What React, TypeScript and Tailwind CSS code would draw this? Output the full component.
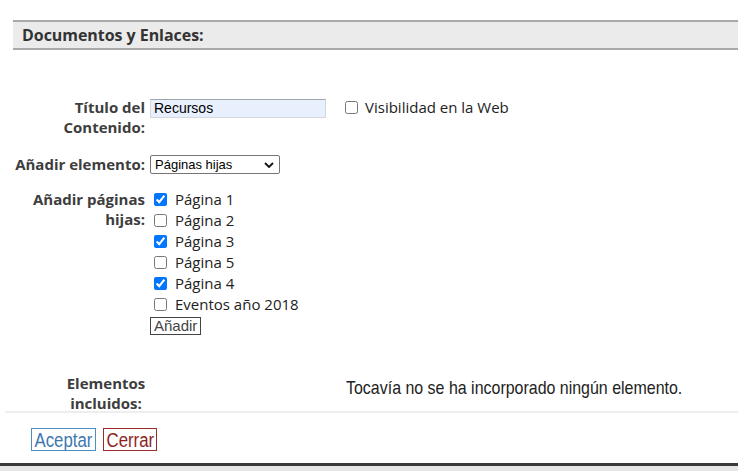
import { useState } from 'react';

const paginas = [
  { id: 'p1', label: 'Página 1', checked: true },
  { id: 'p2', label: 'Página 2', checked: false },
  { id: 'p3', label: 'Página 3', checked: true },
  { id: 'p5', label: 'Página 5', checked: false },
  { id: 'p4', label: 'Página 4', checked: true },
  { id: 'ev', label: 'Eventos año 2018', checked: false },
];

const labelCls =
  "w-[145px] shrink-0 text-right font-['Open_Sans',sans-serif] text-[15px] font-bold leading-[20px] text-[#3d3d3d]";

export default function App() {
  const [checks, setChecks] = useState(paginas.map((p) => p.checked));
  const [visible, setVisible] = useState(false);

  return (
    <div className="h-[471px] w-[738px] overflow-hidden bg-[#e6e6e6]">
      <div className="flex h-[463px] flex-col bg-white shadow-[0_3px_0_0_#3a3a3a]">
        {/* cuerpo */}
        <div className="h-[411px] overflow-hidden pt-[20px]">
          <div className="ml-[13px] flex h-[30px] items-center border-y-2 border-[#a9a9a9] bg-[#ebebeb] pl-[9px]">
            <h2 className="font-['Open_Sans',sans-serif] text-[16px] font-bold tracking-[-0.05px] text-[#333]">
              Documentos y Enlaces:
            </h2>
          </div>

          <div className="mt-[47px] flex flex-col">
            <div className="flex items-start gap-[5px]">
              <label className={labelCls}>
                Título del
                <br />
                Contenido:
              </label>
              <input
                defaultValue="Recursos"
                className="mt-[2px] block h-[19px] w-[176px] border border-[#d4d8de] border-t-[#9fa4aa] bg-[#e8f0fe] px-[3px] font-['Liberation_Sans',sans-serif] text-[14px] text-black outline-none"
              />
              <label className="ml-[14px] mt-[-1px] flex items-center gap-[7px] font-['Open_Sans',sans-serif] text-[15px] leading-[22px] text-[#222]">
                <input
                  type="checkbox"
                  checked={visible}
                  onChange={(e) => setVisible(e.target.checked)}
                  className="h-[13px] w-[13px] accent-[#0075ff]"
                />
                Visibilidad en la Web
              </label>
            </div>

            <div className="mt-[17px] flex items-start gap-[5px]">
              <label className={labelCls}>Añadir elemento:</label>
              <div className="relative mt-[1px]">
                <select className="block h-[19px] w-[130px] appearance-none rounded-[2px] border border-[#767676] bg-white pl-[4px] font-['Liberation_Sans',sans-serif] text-[13px] leading-[17px] text-black outline-none">
                  <option>Páginas hijas</option>
                  <option>Documento</option>
                  <option>Enlace</option>
                </select>
                <svg
                  viewBox="0 0 10 6"
                  className="pointer-events-none absolute right-[6px] top-[7px] h-[6px] w-[10px]"
                >
                  <path d="M1 1l4 4 4-4" fill="none" stroke="#111" strokeWidth="1.8" />
                </svg>
              </div>
            </div>

            <div className="mt-[15px] flex items-start gap-[5px]">
              <label className={labelCls}>
                Añadir páginas
                <br />
                hijas:
              </label>
              <div className="flex flex-col">
                {paginas.map((p, i) => (
                  <label
                    key={p.id}
                    className="flex h-[21px] items-center gap-[8px] pl-[4px] font-['Open_Sans',sans-serif] text-[15px] text-[#222]"
                  >
                    <input
                      type="checkbox"
                      checked={checks[i]}
                      onChange={() =>
                        setChecks((c) => c.map((v, j) => (j === i ? !v : v)))
                      }
                      className="h-[13px] w-[13px] accent-[#0075ff]"
                    />
                    {p.label}
                  </label>
                ))}
                <div className="mt-[2px] flex">
                  <button className="h-[18px] border border-[#444] bg-white px-[3px] font-['Liberation_Sans',sans-serif] text-[15px] leading-[16px] text-[#444]">
                    Añadir
                  </button>
                </div>
              </div>
            </div>

            <div className="mt-[38px] flex items-start">
              <div className="w-[212px] shrink-0 text-center">
                <span className="inline-block text-center font-['Open_Sans',sans-serif] text-[15px] font-bold leading-[20px] text-[#3d3d3d]">
                  Elementos
                  <br />
                  incluidos:
                </span>
              </div>
              <p className="ml-[134px] mt-[5px] whitespace-nowrap font-['Liberation_Sans',sans-serif] text-[19px] leading-[20px] text-[#222]">
                <span className="inline-block origin-left scale-x-[0.84]">
                  Tocavía no se ha incorporado ningún elemento.
                </span>
              </p>
            </div>
          </div>
        </div>

        {/* pie */}
        <div className="ml-[5px] flex gap-[7px] border-t-2 border-[#eeeeee] pl-[26px] pt-[15px]">
          <button className="flex h-[23px] w-[65px] items-center justify-center border border-[#4f8fc0] font-['Liberation_Sans',sans-serif] text-[20px] leading-[20px] text-[#3f78b0]">
            <span className="inline-block scale-x-[0.84]">Aceptar</span>
          </button>
          <button className="flex h-[23px] w-[54px] items-center justify-center border border-[#9b2a2a] font-['Liberation_Sans',sans-serif] text-[20px] leading-[20px] text-[#8e1f1f]">
            <span className="inline-block scale-x-[0.84]">Cerrar</span>
          </button>
        </div>
      </div>
    </div>
  );
}
